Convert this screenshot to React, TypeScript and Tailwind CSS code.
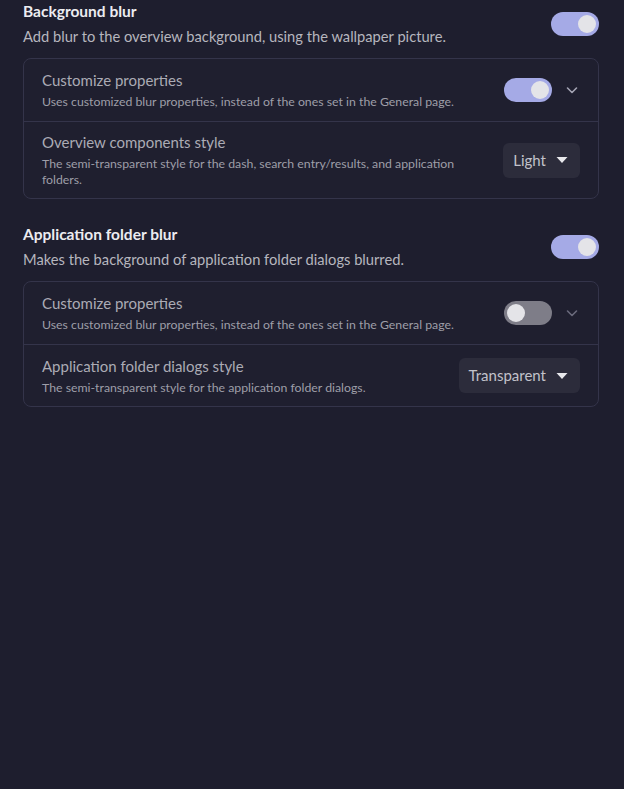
import React from "react";

function Switch({ on }: { on: boolean }) {
  return (
    <div
      className={
        "w-[48px] h-[24px] rounded-full flex items-center px-[3px] shrink-0 " +
        (on ? "bg-[#a5aae6] justify-end" : "bg-[#7e7d88] justify-start")
      }
    >
      <div className="w-[18px] h-[18px] rounded-full bg-[#e4e4e8]" />
    </div>
  );
}

function Chevron({ dim }: { dim?: boolean }) {
  return (
    <svg width="16" height="16" viewBox="0 0 16 16" className="shrink-0">
      <path
        d="M3.5 6 L8 10.5 L12.5 6"
        fill="none"
        stroke={dim ? "#6a6a7c" : "#a4a4b4"}
        strokeWidth="1.6"
        strokeLinecap="round"
        strokeLinejoin="round"
      />
    </svg>
  );
}

function Dropdown({ label }: { label: string }) {
  return (
    <div className="h-[35px] rounded-[6px] bg-[#2c2c3b] flex items-center pl-[10px] pr-[12px] gap-[10px] shrink-0">
      <span className="text-[15px] text-[#c2c2ca]">{label}</span>
      <svg width="12" height="8" viewBox="0 0 12 8">
        <path d="M0.5 1 L11.5 1 L6 7 Z" fill="#e8e8ec" />
      </svg>
    </div>
  );
}

function Row({
  title,
  sub,
  right,
  border,
  minH,
}: {
  title: string;
  sub: string;
  right: React.ReactNode;
  border?: boolean;
  minH: string;
}) {
  return (
    <div
      className={
        "flex items-center pl-[18px] pr-[18px] gap-4 " +
        minH +
        (border ? " border-t border-[#34344a]" : "")
      }
    >
      <div className="flex-1 flex flex-col">
        <div className="text-[15px] leading-[20px] text-[#ababb5]">{title}</div>
        <div className="text-[12.3px] leading-[16px] text-[#9e9ea8] mt-[4px]">{sub}</div>
      </div>
      {right}
    </div>
  );
}

export default function App() {
  return (
    <div
      className="w-[624px] h-[789px] bg-[#1e1e2e] pl-[23px] pr-[25px] pt-[1px]"
      style={{ fontFamily: 'Lato, "Noto Sans", sans-serif' }}
    >
      {/* Section 1 */}
      <div className="flex items-center justify-between">
        <div className="flex flex-col">
          <div className="text-[15.5px] leading-[20px] font-bold text-[#ececf0]">Background blur</div>
          <div className="text-[14.7px] leading-[20px] text-[#b6b6be] mt-[5px]">
            Add blur to the overview background, using the wallpaper picture.
          </div>
        </div>
        <div className="self-start mt-[11px]">
          <Switch on />
        </div>
      </div>
      <div className="mt-[12px] rounded-[8px] border border-[#34344a] bg-[#1f1f2f]">
        <Row
          title="Customize properties"
          sub="Uses customized blur properties, instead of the ones set in the General page."
          minH="h-[62px]"
          right={
            <div className="flex items-center gap-[12px]">
              <Switch on />
              <Chevron />
            </div>
          }
        />
        <Row
          border
          title="Overview components style"
          sub="The semi-transparent style for the dash, search entry/results, and application folders."
          minH="h-[77px]"
          right={<Dropdown label="Light" />}
        />
      </div>

      {/* Section 2 */}
      <div className="flex items-center justify-between mt-[25px]">
        <div className="flex flex-col">
          <div className="text-[15.5px] leading-[20px] font-bold text-[#ececf0]">Application folder blur</div>
          <div className="text-[14.7px] leading-[20px] text-[#b6b6be] mt-[5px]">
            Makes the background of application folder dialogs blurred.
          </div>
        </div>
        <div className="self-start mt-[11px]">
          <Switch on />
        </div>
      </div>
      <div className="mt-[12px] rounded-[8px] border border-[#34344a] bg-[#1f1f2f]">
        <Row
          title="Customize properties"
          sub="Uses customized blur properties, instead of the ones set in the General page."
          minH="h-[62px]"
          right={
            <div className="flex items-center gap-[12px]">
              <Switch on={false} />
              <Chevron dim />
            </div>
          }
        />
        <Row
          border
          title="Application folder dialogs style"
          sub="The semi-transparent style for the application folder dialogs."
          minH="h-[62px]"
          right={<Dropdown label="Transparent" />}
        />
      </div>
    </div>
  );
}
